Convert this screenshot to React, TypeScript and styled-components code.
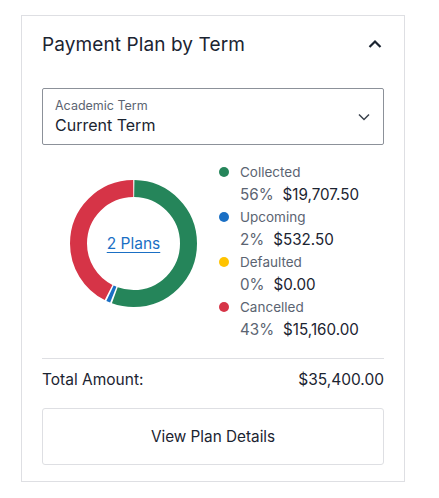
import styled, { createGlobalStyle } from 'styled-components'

const GlobalStyle = createGlobalStyle`
  body {
    margin: 0;
    background: #ffffff;
    font-family: Inter, "Noto Sans", "Liberation Sans", sans-serif;
    color: #1b2431;
  }
`

const colors = {
  collected: '#25855a',
  upcoming: '#1a6fc4',
  defaulted: '#ffc300',
  cancelled: '#d63447',
  border: '#dedfe3',
  muted: '#5b6472',
}

const Card = styled.section`
  box-sizing: border-box;
  width: 384px;
  margin: 15px 0 0 21px;
  padding: 14px 20px 16px;
  border: 1px solid ${colors.border};
  background: #fff;
`

const Header = styled.div`
  display: flex;
  align-items: center;
  justify-content: space-between;
  height: 28px;
`

const Title = styled.h2`
  margin: 0;
  font-size: 19px;
  font-weight: 400;
  letter-spacing: 0.1px;
`

const IconButton = styled.button`
  display: flex;
  padding: 0;
  margin-right: 2px;
  border: 0;
  background: none;
  color: #1b2431;
`

const Select = styled.div`
  box-sizing: border-box;
  display: flex;
  align-items: center;
  justify-content: space-between;
  height: 57px;
  margin-top: 30px;
  padding: 0 13px 0 12px;
  border: 1px solid #8c9199;
  border-radius: 2px;
`

const SelectText = styled.div`
  display: flex;
  flex-direction: column;
`

const SelectLabel = styled.span`
  font-size: 12.5px;
  line-height: 16px;
  color: ${colors.muted};
`

const SelectValue = styled.span`
  font-size: 16px;
  line-height: 22px;
`

const ChartRow = styled.div`
  display: flex;
  align-items: center;
  margin-top: 16px;
  padding-left: 28px;
  gap: 22px;
`

const Donut = styled.div`
  position: relative;
  width: 127px;
  height: 127px;
  margin-top: -16px;
`

const CenterLink = styled.a`
  position: absolute;
  inset: 0;
  display: flex;
  align-items: center;
  justify-content: center;
  font-size: 15.5px;
  color: ${colors.upcoming};
  text-decoration: underline;
  text-underline-offset: 3px;
`

const Legend = styled.ul`
  margin: 0;
  padding: 0;
  list-style: none;
`

const LegendItem = styled.li`
  display: grid;
  grid-template-columns: 11px auto;
  column-gap: 10px;
  align-items: center;
`

const Dot = styled.span<{ $color: string }>`
  width: 10px;
  height: 10px;
  border-radius: 50%;
  background: ${(p) => p.$color};
`

const LegendLabel = styled.span`
  font-size: 13.5px;
  line-height: 22.5px;
  color: ${colors.muted};
`

const LegendValue = styled.span`
  grid-column: 2;
  display: flex;
  gap: 9px;
  font-size: 15.2px;
  line-height: 22.5px;
`

const Percent = styled.span`
  color: ${colors.muted};
`

const Divider = styled.hr`
  margin: 17px 0 0;
  border: 0;
  border-top: 1px solid ${colors.border};
`

const TotalRow = styled.div`
  display: flex;
  justify-content: space-between;
  align-items: center;
  height: 40px;
  font-size: 15.5px;
`

const DetailsButton = styled.button`
  box-sizing: border-box;
  width: 100%;
  height: 57px;
  margin-top: 9px;
  border: 1px solid ${colors.border};
  border-radius: 3px;
  background: #fff;
  font-family: inherit;
  font-size: 15.3px;
  color: #1b2431;
`

const data = [
  { label: 'Collected', amount: 19707.5, pct: '56%', color: colors.collected },
  { label: 'Upcoming', amount: 532.5, pct: '2%', color: colors.upcoming },
  { label: 'Defaulted', amount: 0, pct: '0%', color: colors.defaulted },
  { label: 'Cancelled', amount: 15160, pct: '43%', color: colors.cancelled },
]

const total = data.reduce((s, d) => s + d.amount, 0)
const money = (n: number) =>
  '$' + n.toLocaleString('en-US', { minimumFractionDigits: 2, maximumFractionDigits: 2 })

function DonutChart() {
  const r = 55
  const c = 2 * Math.PI * r
  let offset = 0
  const gap = 1.6
  return (
    <svg width="127" height="127" viewBox="0 0 127 127">
      <g transform="rotate(-90 63.5 63.5)">
        {data
          .filter((d) => d.amount > 0)
          .map((d) => {
            const len = (d.amount / total) * c
            const seg = (
              <circle
                key={d.label}
                cx="63.5"
                cy="63.5"
                r={r}
                fill="none"
                stroke={d.color}
                strokeWidth="17"
                strokeDasharray={`${Math.max(len - gap, 0.5)} ${c}`}
                strokeDashoffset={-(offset + gap / 2)}
              />
            )
            offset += len
            return seg
          })}
      </g>
    </svg>
  )
}

export default function App() {
  return (
    <>
      <GlobalStyle />
      <Card>
        <Header>
          <Title>Payment Plan by Term</Title>
          <IconButton aria-label="Collapse">
            <svg width="14" height="10" viewBox="0 0 14 10">
              <path d="M1.5 8 L7 2.5 L12.5 8" fill="none" stroke="currentColor" strokeWidth="2.2" />
            </svg>
          </IconButton>
        </Header>
        <Select>
          <SelectText>
            <SelectLabel>Academic Term</SelectLabel>
            <SelectValue>Current Term</SelectValue>
          </SelectText>
          <svg width="12" height="8" viewBox="0 0 12 8">
            <path d="M1 1.5 L6 6.5 L11 1.5" fill="none" stroke="#3a414c" strokeWidth="1.5" />
          </svg>
        </Select>
        <ChartRow>
          <Donut>
            <DonutChart />
            <CenterLink href="#">2 Plans</CenterLink>
          </Donut>
          <Legend>
            {data.map((d) => (
              <LegendItem key={d.label}>
                <Dot $color={d.color} />
                <LegendLabel>{d.label}</LegendLabel>
                <LegendValue>
                  <Percent>{d.pct}</Percent>
                  <span>{money(d.amount)}</span>
                </LegendValue>
              </LegendItem>
            ))}
          </Legend>
        </ChartRow>
        <Divider />
        <TotalRow>
          <span>Total Amount:</span>
          <span>{money(total)}</span>
        </TotalRow>
        <DetailsButton>View Plan Details</DetailsButton>
      </Card>
    </>
  )
}
